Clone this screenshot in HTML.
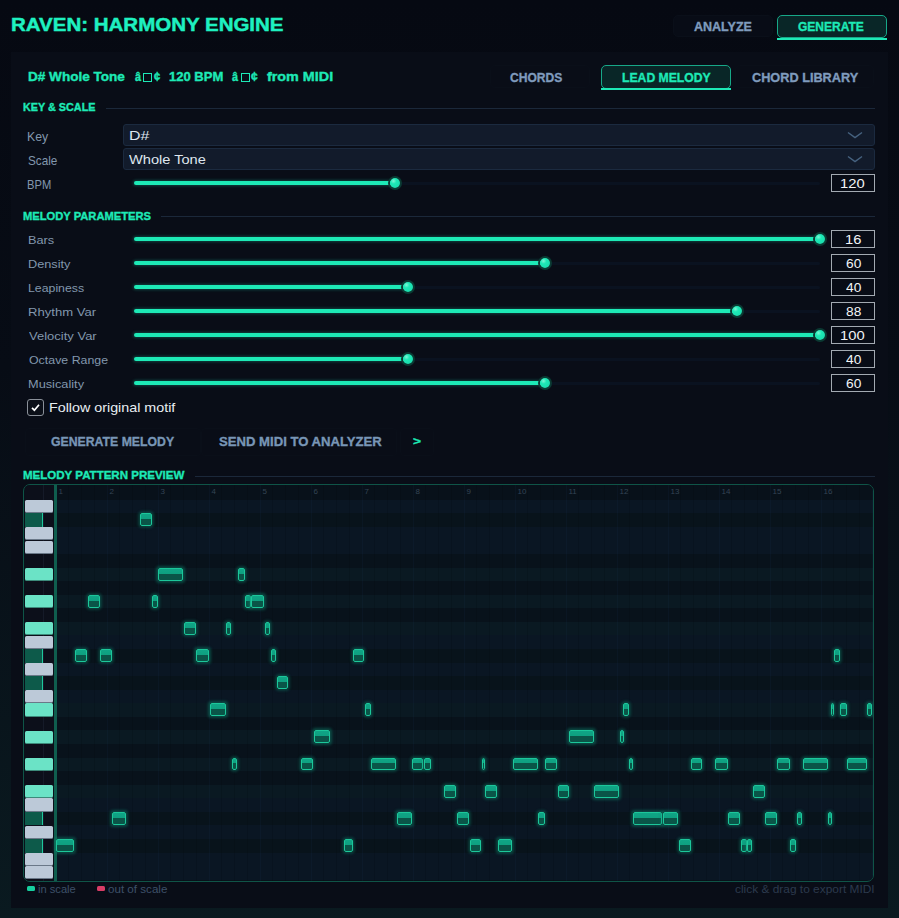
<!DOCTYPE html><html><head><meta charset="utf-8"><style>
*{box-sizing:border-box;margin:0;padding:0}
html,body{width:899px;height:918px;overflow:hidden}
body{position:relative;font-family:"Liberation Sans",sans-serif;background:linear-gradient(180deg,#060912 0%,#070c15 40%,#0a1a20 100%)}
.t{position:absolute;white-space:pre;line-height:1;transform-origin:0 0}
.b{position:absolute}
.n{position:absolute;border:1px solid #1cc79a;border-radius:2px;background:linear-gradient(180deg,#10a586 0,#0ea080 44%,#0a5548 44%,#0a5548 100%);box-shadow:0 0 3px 1.5px rgba(14,140,112,0.45)}
</style></head><body>
<div class="b" style="left:11px;top:52px;width:877px;height:856px;background:#090d17"></div>
<div class="t" id="t0" style="left:11.398px;top:14.76px;font-size:18.99px;transform:scaleX(1.07961);font-weight:bold;color:#1ef0c0;-webkit-text-stroke:0.45px #1ef0c0;">RAVEN: HARMONY ENGINE</div>
<div class="b" style="left:673px;top:15px;width:100px;height:22px;border:1px solid #0a0f19;border-radius:5px;background:#080c16"></div>
<div class="b" style="left:777px;top:15px;width:110px;height:23px;border:1px solid #17a888;border-radius:5px;background:#092627"></div>
<div class="b" style="left:777px;top:38px;width:110px;height:2px;background:#1de9b6"></div>
<div class="t" id="t1" style="left:693.800px;top:19.79px;font-size:13.19px;transform:scaleX(0.94888);font-weight:bold;color:#7f9bbd;-webkit-text-stroke:0.35px #7f9bbd;">ANALYZE</div>
<div class="t" id="t2" style="left:798.204px;top:19.79px;font-size:13.19px;transform:scaleX(0.91080);font-weight:bold;color:#1de9b6;-webkit-text-stroke:0.35px #1de9b6;">GENERATE</div>
<div class="t" id="t3" style="left:28.003px;top:71.35px;font-size:12.17px;transform:scaleX(1.11497);font-weight:bold;color:#1de9b6;-webkit-text-stroke:0.35px #1de9b6;">D# Whole Tone</div>
<div class="t" id="t4" style="left:134.750px;top:71.35px;font-size:12.17px;transform:scaleX(0.89091);font-weight:bold;color:#1de9b6;-webkit-text-stroke:0.35px #1de9b6;">â</div>
<div class="b" style="left:142.7px;top:73.3px;width:9.300000000000011px;height:8.5px;border:1.3px solid #1de9b6"></div>
<div class="t" id="t5" style="left:153.777px;top:71.35px;font-size:12.17px;transform:scaleX(0.92190);font-weight:bold;color:#1de9b6;-webkit-text-stroke:0.35px #1de9b6;">¢</div>
<div class="t" id="t6" style="left:232.437px;top:71.35px;font-size:12.17px;transform:scaleX(0.89091);font-weight:bold;color:#1de9b6;-webkit-text-stroke:0.35px #1de9b6;">â</div>
<div class="b" style="left:241px;top:73.3px;width:9.400000000000006px;height:8.5px;border:1.3px solid #1de9b6"></div>
<div class="t" id="t7" style="left:251.426px;top:71.35px;font-size:12.17px;transform:scaleX(0.98685);font-weight:bold;color:#1de9b6;-webkit-text-stroke:0.35px #1de9b6;">¢</div>
<div class="t" id="t8" style="left:169.399px;top:71.35px;font-size:12.17px;transform:scaleX(1.07194);font-weight:bold;color:#1de9b6;-webkit-text-stroke:0.35px #1de9b6;">120 BPM</div>
<div class="t" id="t9" style="left:266.995px;top:71.35px;font-size:12.17px;transform:scaleX(1.17961);font-weight:bold;color:#1de9b6;-webkit-text-stroke:0.35px #1de9b6;">from MIDI</div>
<div class="b" style="left:490px;top:65px;width:100px;height:23px;border:1px solid #0a0f19;border-radius:5px"></div>
<div class="b" style="left:735px;top:65px;width:139px;height:23px;border:1px solid #0a0f19;border-radius:5px"></div>
<div class="b" style="left:601px;top:65px;width:130px;height:24px;border:1px solid #17a888;border-radius:5px;background:#092627"></div>
<div class="b" style="left:601px;top:88px;width:130px;height:2px;background:#1de9b6"></div>
<div class="t" id="t10" style="left:510.010px;top:70.67px;font-size:13.33px;transform:scaleX(0.90718);font-weight:bold;color:#7f9bbd;-webkit-text-stroke:0.35px #7f9bbd;">CHORDS</div>
<div class="t" id="t11" style="left:621.793px;top:70.67px;font-size:13.33px;transform:scaleX(0.91488);font-weight:bold;color:#1de9b6;-webkit-text-stroke:0.35px #1de9b6;">LEAD MELODY</div>
<div class="t" id="t12" style="left:752.007px;top:70.67px;font-size:13.33px;transform:scaleX(0.95365);font-weight:bold;color:#7f9bbd;-webkit-text-stroke:0.35px #7f9bbd;">CHORD LIBRARY</div>
<div class="t" id="t13" style="left:23.204px;top:102.24px;font-size:11.01px;transform:scaleX(0.98283);font-weight:bold;color:#1de9b6;-webkit-text-stroke:0.35px #1de9b6;">KEY &amp; SCALE</div>
<div class="b" style="left:106px;top:108px;width:769px;height:1px;background:#1b283a"></div>
<div class="t" id="t14" style="left:23.201px;top:210.64px;font-size:11.01px;transform:scaleX(1.01546);font-weight:bold;color:#1de9b6;-webkit-text-stroke:0.35px #1de9b6;">MELODY PARAMETERS</div>
<div class="b" style="left:161px;top:216px;width:714px;height:1px;background:#1b283a"></div>
<div class="t" id="t15" style="left:23.401px;top:470.07px;font-size:11.45px;transform:scaleX(1.00766);font-weight:bold;color:#1de9b6;-webkit-text-stroke:0.35px #1de9b6;">MELODY PATTERN PREVIEW</div>
<div class="b" style="left:195px;top:476px;width:680px;height:1px;background:#1b283a"></div>
<div class="t" id="t16" style="left:27.158px;top:130.58px;font-size:12.03px;transform:scaleX(1.02255);font-weight:normal;color:#8297ad;-webkit-text-stroke:0px #8297ad;">Key</div>
<div class="t" id="t17" style="left:28.005px;top:154.58px;font-size:12.03px;transform:scaleX(0.97603);font-weight:normal;color:#8297ad;-webkit-text-stroke:0px #8297ad;">Scale</div>
<div class="t" id="t18" style="left:26.925px;top:178.58px;font-size:12.03px;transform:scaleX(0.92842);font-weight:normal;color:#8297ad;-webkit-text-stroke:0px #8297ad;">BPM</div>
<div class="b" style="left:123px;top:124px;width:752px;height:22px;border:1px solid #1b2a3f;border-radius:3px;background:#121b2b"></div>
<svg class="b" style="left:846px;top:131px" width="18" height="9" viewBox="0 0 18 9"><path d="M2 1.5 L9 6.5 L16 1.5" fill="none" stroke="#46627f" stroke-width="1.5"/></svg>
<div class="b" style="left:123px;top:148px;width:752px;height:22px;border:1px solid #1b2a3f;border-radius:3px;background:#121b2b"></div>
<svg class="b" style="left:846px;top:155px" width="18" height="9" viewBox="0 0 18 9"><path d="M2 1.5 L9 6.5 L16 1.5" fill="none" stroke="#46627f" stroke-width="1.5"/></svg>
<div class="t" id="t19" style="left:128.763px;top:128.57px;font-size:13.33px;transform:scaleX(1.19219);font-weight:normal;color:#dfe6ee;-webkit-text-stroke:0px #dfe6ee;">D#</div>
<div class="t" id="t20" style="left:128.997px;top:152.57px;font-size:13.33px;transform:scaleX(1.09522);font-weight:normal;color:#dfe6ee;-webkit-text-stroke:0px #dfe6ee;">Whole Tone</div>
<div class="b" style="left:134px;top:181.5px;width:686px;height:3px;border-radius:1.5px;background:#0a1220"></div>
<div class="b" style="left:134px;top:181px;width:261.3px;height:4px;border-radius:2px;background:#1de9b6;box-shadow:0 0 3px 1px rgba(29,233,182,0.25)"></div>
<div class="b" style="left:390.3px;top:178px;width:10px;height:10px;border-radius:50%;background:radial-gradient(circle at 35% 30%,#7ff5d5 0,#1de9b6 30%,#19d6a8 100%);box-shadow:0 0 0 2px #0b3a33"></div>
<div class="b" style="left:831px;top:174px;width:44px;height:18px;border:1.3px solid #a3aab2;background:#080c16"></div>
<div class="t" id="t21" style="left:839.997px;top:176.79px;font-size:13.19px;transform:scaleX(1.11988);font-weight:normal;color:#f2f4f6;-webkit-text-stroke:0px #f2f4f6;">120</div>
<div class="t" id="t22" style="left:27.758px;top:235.14px;font-size:11.59px;transform:scaleX(1.10204);font-weight:normal;color:#8297ad;-webkit-text-stroke:0px #8297ad;">Bars</div>
<div class="b" style="left:134px;top:237.5px;width:686px;height:3px;border-radius:1.5px;background:#0a1220"></div>
<div class="b" style="left:134px;top:237px;width:685.7px;height:4px;border-radius:2px;background:#1de9b6;box-shadow:0 0 3px 1px rgba(29,233,182,0.25)"></div>
<div class="b" style="left:814.7px;top:234px;width:10px;height:10px;border-radius:50%;background:radial-gradient(circle at 35% 30%,#7ff5d5 0,#1de9b6 30%,#19d6a8 100%);box-shadow:0 0 0 2px #0b3a33"></div>
<div class="b" style="left:831px;top:230px;width:44px;height:18px;border:1.3px solid #a3aab2;background:#080c16"></div>
<div class="t" id="t23" style="left:844.694px;top:232.79px;font-size:13.19px;transform:scaleX(1.11675);font-weight:normal;color:#f2f4f6;-webkit-text-stroke:0px #f2f4f6;">16</div>
<div class="t" id="t24" style="left:27.788px;top:259.14px;font-size:11.59px;transform:scaleX(1.09976);font-weight:normal;color:#8297ad;-webkit-text-stroke:0px #8297ad;">Density</div>
<div class="b" style="left:134px;top:261.5px;width:686px;height:3px;border-radius:1.5px;background:#0a1220"></div>
<div class="b" style="left:134px;top:261px;width:411px;height:4px;border-radius:2px;background:#1de9b6;box-shadow:0 0 3px 1px rgba(29,233,182,0.25)"></div>
<div class="b" style="left:540px;top:258px;width:10px;height:10px;border-radius:50%;background:radial-gradient(circle at 35% 30%,#7ff5d5 0,#1de9b6 30%,#19d6a8 100%);box-shadow:0 0 0 2px #0b3a33"></div>
<div class="b" style="left:831px;top:254px;width:44px;height:18px;border:1.3px solid #a3aab2;background:#080c16"></div>
<div class="t" id="t25" style="left:845.756px;top:256.79px;font-size:13.19px;transform:scaleX(1.04230);font-weight:normal;color:#f2f4f6;-webkit-text-stroke:0px #f2f4f6;">60</div>
<div class="t" id="t26" style="left:27.788px;top:283.14px;font-size:11.59px;transform:scaleX(1.06331);font-weight:normal;color:#8297ad;-webkit-text-stroke:0px #8297ad;">Leapiness</div>
<div class="b" style="left:134px;top:285.5px;width:686px;height:3px;border-radius:1.5px;background:#0a1220"></div>
<div class="b" style="left:134px;top:285px;width:274px;height:4px;border-radius:2px;background:#1de9b6;box-shadow:0 0 3px 1px rgba(29,233,182,0.25)"></div>
<div class="b" style="left:403px;top:282px;width:10px;height:10px;border-radius:50%;background:radial-gradient(circle at 35% 30%,#7ff5d5 0,#1de9b6 30%,#19d6a8 100%);box-shadow:0 0 0 2px #0b3a33"></div>
<div class="b" style="left:831px;top:278px;width:44px;height:18px;border:1.3px solid #a3aab2;background:#080c16"></div>
<div class="t" id="t27" style="left:845.756px;top:280.79px;font-size:13.19px;transform:scaleX(1.04230);font-weight:normal;color:#f2f4f6;-webkit-text-stroke:0px #f2f4f6;">40</div>
<div class="t" id="t28" style="left:27.795px;top:307.14px;font-size:11.59px;transform:scaleX(1.12970);font-weight:normal;color:#8297ad;-webkit-text-stroke:0px #8297ad;">Rhythm Var</div>
<div class="b" style="left:134px;top:309.5px;width:686px;height:3px;border-radius:1.5px;background:#0a1220"></div>
<div class="b" style="left:134px;top:309px;width:603px;height:4px;border-radius:2px;background:#1de9b6;box-shadow:0 0 3px 1px rgba(29,233,182,0.25)"></div>
<div class="b" style="left:732px;top:306px;width:10px;height:10px;border-radius:50%;background:radial-gradient(circle at 35% 30%,#7ff5d5 0,#1de9b6 30%,#19d6a8 100%);box-shadow:0 0 0 2px #0b3a33"></div>
<div class="b" style="left:831px;top:302px;width:44px;height:18px;border:1.3px solid #a3aab2;background:#080c16"></div>
<div class="t" id="t29" style="left:845.756px;top:304.79px;font-size:13.19px;transform:scaleX(1.04230);font-weight:normal;color:#f2f4f6;-webkit-text-stroke:0px #f2f4f6;">88</div>
<div class="t" id="t30" style="left:28.802px;top:331.14px;font-size:11.59px;transform:scaleX(1.12302);font-weight:normal;color:#8297ad;-webkit-text-stroke:0px #8297ad;">Velocity Var</div>
<div class="b" style="left:134px;top:333.5px;width:686px;height:3px;border-radius:1.5px;background:#0a1220"></div>
<div class="b" style="left:134px;top:333px;width:685.7px;height:4px;border-radius:2px;background:#1de9b6;box-shadow:0 0 3px 1px rgba(29,233,182,0.25)"></div>
<div class="b" style="left:814.7px;top:330px;width:10px;height:10px;border-radius:50%;background:radial-gradient(circle at 35% 30%,#7ff5d5 0,#1de9b6 30%,#19d6a8 100%);box-shadow:0 0 0 2px #0b3a33"></div>
<div class="b" style="left:831px;top:326px;width:44px;height:18px;border:1.3px solid #a3aab2;background:#080c16"></div>
<div class="t" id="t31" style="left:839.997px;top:328.79px;font-size:13.19px;transform:scaleX(1.11988);font-weight:normal;color:#f2f4f6;-webkit-text-stroke:0px #f2f4f6;">100</div>
<div class="t" id="t32" style="left:28.803px;top:355.14px;font-size:11.59px;transform:scaleX(1.06853);font-weight:normal;color:#8297ad;-webkit-text-stroke:0px #8297ad;">Octave Range</div>
<div class="b" style="left:134px;top:357.5px;width:686px;height:3px;border-radius:1.5px;background:#0a1220"></div>
<div class="b" style="left:134px;top:357px;width:274px;height:4px;border-radius:2px;background:#1de9b6;box-shadow:0 0 3px 1px rgba(29,233,182,0.25)"></div>
<div class="b" style="left:403px;top:354px;width:10px;height:10px;border-radius:50%;background:radial-gradient(circle at 35% 30%,#7ff5d5 0,#1de9b6 30%,#19d6a8 100%);box-shadow:0 0 0 2px #0b3a33"></div>
<div class="b" style="left:831px;top:350px;width:44px;height:18px;border:1.3px solid #a3aab2;background:#080c16"></div>
<div class="t" id="t33" style="left:845.756px;top:352.79px;font-size:13.19px;transform:scaleX(1.04230);font-weight:normal;color:#f2f4f6;-webkit-text-stroke:0px #f2f4f6;">40</div>
<div class="t" id="t34" style="left:27.788px;top:379.14px;font-size:11.59px;transform:scaleX(1.10240);font-weight:normal;color:#8297ad;-webkit-text-stroke:0px #8297ad;">Musicality</div>
<div class="b" style="left:134px;top:381.5px;width:686px;height:3px;border-radius:1.5px;background:#0a1220"></div>
<div class="b" style="left:134px;top:381px;width:411px;height:4px;border-radius:2px;background:#1de9b6;box-shadow:0 0 3px 1px rgba(29,233,182,0.25)"></div>
<div class="b" style="left:540px;top:378px;width:10px;height:10px;border-radius:50%;background:radial-gradient(circle at 35% 30%,#7ff5d5 0,#1de9b6 30%,#19d6a8 100%);box-shadow:0 0 0 2px #0b3a33"></div>
<div class="b" style="left:831px;top:374px;width:44px;height:18px;border:1.3px solid #a3aab2;background:#080c16"></div>
<div class="t" id="t35" style="left:845.756px;top:376.79px;font-size:13.19px;transform:scaleX(1.04230);font-weight:normal;color:#f2f4f6;-webkit-text-stroke:0px #f2f4f6;">60</div>
<div class="b" style="left:26.5px;top:398.5px;width:17px;height:17px;border:1.5px solid #8a9099;border-radius:3px;background:#0b0f18"></div>
<svg class="b" style="left:26.5px;top:398.5px" width="17" height="17" viewBox="0 0 17 17"><path d="M5 8.8 L7.4 11.2 L12 5.8" fill="none" stroke="#ffffff" stroke-width="1.7"/></svg>
<div class="t" id="t36" style="left:48.596px;top:400.77px;font-size:13.33px;transform:scaleX(1.07236);font-weight:normal;color:#e8edf2;-webkit-text-stroke:0px #e8edf2;">Follow original motif</div>
<div class="b" style="left:25px;top:428px;width:176px;height:28px;border:1px solid #0a0f19;border-radius:4px"></div>
<div class="b" style="left:201px;top:428px;width:196px;height:28px;border:1px solid #0a0f19;border-radius:4px"></div>
<div class="b" style="left:400px;top:428px;width:34px;height:28px;border:1px solid #0a0f19;border-radius:4px"></div>
<div class="t" id="t37" style="left:51.397px;top:434.77px;font-size:13.33px;transform:scaleX(0.92027);font-weight:bold;color:#7896b6;-webkit-text-stroke:0.35px #7896b6;">GENERATE MELODY</div>
<div class="t" id="t38" style="left:219.000px;top:434.77px;font-size:13.33px;transform:scaleX(0.98419);font-weight:bold;color:#7896b6;-webkit-text-stroke:0.35px #7896b6;">SEND MIDI TO ANALYZER</div>
<div class="t" id="t39" style="left:413.000px;top:435.64px;font-size:11.59px;transform:scaleX(1.18340);font-weight:bold;color:#1de9b6;-webkit-text-stroke:0.35px #1de9b6;">&gt;</div>
<div class="b" style="left:23px;top:484px;width:851px;height:398px;border:1px solid #0f5447;border-radius:7px;background:#08111a;overflow:hidden">
<div class="b" style="left:33px;top:14.70px;width:816px;height:13.62px;background:#0a1623"></div>
<div class="b" style="left:33px;top:28.27px;width:816px;height:13.62px;background:#08131b"></div>
<div class="b" style="left:33px;top:41.84px;width:816px;height:13.62px;background:#0a1623"></div>
<div class="b" style="left:33px;top:55.41px;width:816px;height:13.62px;background:#0a1623"></div>
<div class="b" style="left:33px;top:68.98px;width:816px;height:13.62px;background:#08121b"></div>
<div class="b" style="left:33px;top:82.55px;width:816px;height:13.62px;background:#0a1922"></div>
<div class="b" style="left:33px;top:96.12px;width:816px;height:13.62px;background:#08121b"></div>
<div class="b" style="left:33px;top:109.69px;width:816px;height:13.62px;background:#0a1922"></div>
<div class="b" style="left:33px;top:123.26px;width:816px;height:13.62px;background:#08121b"></div>
<div class="b" style="left:33px;top:136.83px;width:816px;height:13.62px;background:#0a1922"></div>
<div class="b" style="left:33px;top:150.40px;width:816px;height:13.62px;background:#0a1623"></div>
<div class="b" style="left:33px;top:163.97px;width:816px;height:13.62px;background:#08131b"></div>
<div class="b" style="left:33px;top:177.54px;width:816px;height:13.62px;background:#0a1623"></div>
<div class="b" style="left:33px;top:191.11px;width:816px;height:13.62px;background:#08131b"></div>
<div class="b" style="left:33px;top:204.68px;width:816px;height:13.62px;background:#0a1623"></div>
<div class="b" style="left:33px;top:218.25px;width:816px;height:13.62px;background:#0a1922"></div>
<div class="b" style="left:33px;top:231.82px;width:816px;height:13.62px;background:#08121b"></div>
<div class="b" style="left:33px;top:245.39px;width:816px;height:13.62px;background:#0a1922"></div>
<div class="b" style="left:33px;top:258.96px;width:816px;height:13.62px;background:#08121b"></div>
<div class="b" style="left:33px;top:272.53px;width:816px;height:13.62px;background:#0a1922"></div>
<div class="b" style="left:33px;top:286.10px;width:816px;height:13.62px;background:#08121b"></div>
<div class="b" style="left:33px;top:299.67px;width:816px;height:13.62px;background:#0a1922"></div>
<div class="b" style="left:33px;top:313.24px;width:816px;height:13.62px;background:#0a1623"></div>
<div class="b" style="left:33px;top:326.81px;width:816px;height:13.62px;background:#08131b"></div>
<div class="b" style="left:33px;top:340.38px;width:816px;height:13.62px;background:#0a1623"></div>
<div class="b" style="left:33px;top:353.95px;width:816px;height:13.62px;background:#08131b"></div>
<div class="b" style="left:33px;top:367.52px;width:816px;height:13.62px;background:#0a1623"></div>
<div class="b" style="left:33px;top:381.09px;width:816px;height:13.62px;background:#0a1623"></div>
<div class="b" style="left:33px;top:0;width:816px;height:14.699999999999989px;background:#08111a"></div>
<div class="b" style="left:44.25px;top:0;width:1px;height:398px;background:rgba(0,0,0,0.10)"></div>
<div class="b" style="left:57.00px;top:0;width:1px;height:398px;background:rgba(0,0,0,0.10)"></div>
<div class="b" style="left:69.75px;top:0;width:1px;height:398px;background:rgba(0,0,0,0.10)"></div>
<div class="b" style="left:82.50px;top:0;width:1px;height:398px;background:rgba(40,80,140,0.07)"></div>
<div class="b" style="left:95.25px;top:0;width:1px;height:398px;background:rgba(0,0,0,0.10)"></div>
<div class="b" style="left:108.00px;top:0;width:1px;height:398px;background:rgba(0,0,0,0.10)"></div>
<div class="b" style="left:120.75px;top:0;width:1px;height:398px;background:rgba(0,0,0,0.10)"></div>
<div class="b" style="left:133.50px;top:0;width:1px;height:398px;background:rgba(40,80,140,0.07)"></div>
<div class="b" style="left:146.25px;top:0;width:1px;height:398px;background:rgba(0,0,0,0.10)"></div>
<div class="b" style="left:159.00px;top:0;width:1px;height:398px;background:rgba(0,0,0,0.10)"></div>
<div class="b" style="left:171.75px;top:0;width:1px;height:398px;background:rgba(0,0,0,0.10)"></div>
<div class="b" style="left:184.50px;top:0;width:1px;height:398px;background:rgba(40,80,140,0.07)"></div>
<div class="b" style="left:197.25px;top:0;width:1px;height:398px;background:rgba(0,0,0,0.10)"></div>
<div class="b" style="left:210.00px;top:0;width:1px;height:398px;background:rgba(0,0,0,0.10)"></div>
<div class="b" style="left:222.75px;top:0;width:1px;height:398px;background:rgba(0,0,0,0.10)"></div>
<div class="b" style="left:235.50px;top:0;width:1px;height:398px;background:rgba(40,80,140,0.07)"></div>
<div class="b" style="left:248.25px;top:0;width:1px;height:398px;background:rgba(0,0,0,0.10)"></div>
<div class="b" style="left:261.00px;top:0;width:1px;height:398px;background:rgba(0,0,0,0.10)"></div>
<div class="b" style="left:273.75px;top:0;width:1px;height:398px;background:rgba(0,0,0,0.10)"></div>
<div class="b" style="left:286.50px;top:0;width:1px;height:398px;background:rgba(40,80,140,0.07)"></div>
<div class="b" style="left:299.25px;top:0;width:1px;height:398px;background:rgba(0,0,0,0.10)"></div>
<div class="b" style="left:312.00px;top:0;width:1px;height:398px;background:rgba(0,0,0,0.10)"></div>
<div class="b" style="left:324.75px;top:0;width:1px;height:398px;background:rgba(0,0,0,0.10)"></div>
<div class="b" style="left:337.50px;top:0;width:1px;height:398px;background:rgba(40,80,140,0.07)"></div>
<div class="b" style="left:350.25px;top:0;width:1px;height:398px;background:rgba(0,0,0,0.10)"></div>
<div class="b" style="left:363.00px;top:0;width:1px;height:398px;background:rgba(0,0,0,0.10)"></div>
<div class="b" style="left:375.75px;top:0;width:1px;height:398px;background:rgba(0,0,0,0.10)"></div>
<div class="b" style="left:388.50px;top:0;width:1px;height:398px;background:rgba(40,80,140,0.07)"></div>
<div class="b" style="left:401.25px;top:0;width:1px;height:398px;background:rgba(0,0,0,0.10)"></div>
<div class="b" style="left:414.00px;top:0;width:1px;height:398px;background:rgba(0,0,0,0.10)"></div>
<div class="b" style="left:426.75px;top:0;width:1px;height:398px;background:rgba(0,0,0,0.10)"></div>
<div class="b" style="left:439.50px;top:0;width:1px;height:398px;background:rgba(40,80,140,0.07)"></div>
<div class="b" style="left:452.25px;top:0;width:1px;height:398px;background:rgba(0,0,0,0.10)"></div>
<div class="b" style="left:465.00px;top:0;width:1px;height:398px;background:rgba(0,0,0,0.10)"></div>
<div class="b" style="left:477.75px;top:0;width:1px;height:398px;background:rgba(0,0,0,0.10)"></div>
<div class="b" style="left:490.50px;top:0;width:1px;height:398px;background:rgba(40,80,140,0.07)"></div>
<div class="b" style="left:503.25px;top:0;width:1px;height:398px;background:rgba(0,0,0,0.10)"></div>
<div class="b" style="left:516.00px;top:0;width:1px;height:398px;background:rgba(0,0,0,0.10)"></div>
<div class="b" style="left:528.75px;top:0;width:1px;height:398px;background:rgba(0,0,0,0.10)"></div>
<div class="b" style="left:541.50px;top:0;width:1px;height:398px;background:rgba(40,80,140,0.07)"></div>
<div class="b" style="left:554.25px;top:0;width:1px;height:398px;background:rgba(0,0,0,0.10)"></div>
<div class="b" style="left:567.00px;top:0;width:1px;height:398px;background:rgba(0,0,0,0.10)"></div>
<div class="b" style="left:579.75px;top:0;width:1px;height:398px;background:rgba(0,0,0,0.10)"></div>
<div class="b" style="left:592.50px;top:0;width:1px;height:398px;background:rgba(40,80,140,0.07)"></div>
<div class="b" style="left:605.25px;top:0;width:1px;height:398px;background:rgba(0,0,0,0.10)"></div>
<div class="b" style="left:618.00px;top:0;width:1px;height:398px;background:rgba(0,0,0,0.10)"></div>
<div class="b" style="left:630.75px;top:0;width:1px;height:398px;background:rgba(0,0,0,0.10)"></div>
<div class="b" style="left:643.50px;top:0;width:1px;height:398px;background:rgba(40,80,140,0.07)"></div>
<div class="b" style="left:656.25px;top:0;width:1px;height:398px;background:rgba(0,0,0,0.10)"></div>
<div class="b" style="left:669.00px;top:0;width:1px;height:398px;background:rgba(0,0,0,0.10)"></div>
<div class="b" style="left:681.75px;top:0;width:1px;height:398px;background:rgba(0,0,0,0.10)"></div>
<div class="b" style="left:694.50px;top:0;width:1px;height:398px;background:rgba(40,80,140,0.07)"></div>
<div class="b" style="left:707.25px;top:0;width:1px;height:398px;background:rgba(0,0,0,0.10)"></div>
<div class="b" style="left:720.00px;top:0;width:1px;height:398px;background:rgba(0,0,0,0.10)"></div>
<div class="b" style="left:732.75px;top:0;width:1px;height:398px;background:rgba(0,0,0,0.10)"></div>
<div class="b" style="left:745.50px;top:0;width:1px;height:398px;background:rgba(40,80,140,0.07)"></div>
<div class="b" style="left:758.25px;top:0;width:1px;height:398px;background:rgba(0,0,0,0.10)"></div>
<div class="b" style="left:771.00px;top:0;width:1px;height:398px;background:rgba(0,0,0,0.10)"></div>
<div class="b" style="left:783.75px;top:0;width:1px;height:398px;background:rgba(0,0,0,0.10)"></div>
<div class="b" style="left:796.50px;top:0;width:1px;height:398px;background:rgba(40,80,140,0.07)"></div>
<div class="b" style="left:809.25px;top:0;width:1px;height:398px;background:rgba(0,0,0,0.10)"></div>
<div class="b" style="left:822.00px;top:0;width:1px;height:398px;background:rgba(0,0,0,0.10)"></div>
<div class="b" style="left:834.75px;top:0;width:1px;height:398px;background:rgba(0,0,0,0.10)"></div>
<div class="b" style="left:847.50px;top:0;width:1px;height:398px;background:rgba(40,80,140,0.07)"></div>
<div class="b" style="left:1px;top:0;width:29px;height:398px;background:#0c0f1a"></div>
<div class="b" style="left:19px;top:0;width:1px;height:398px;background:#151a28"></div>
<div class="b" style="left:1px;top:14.90px;width:28px;height:12.07px;background:#bcc9d8;border-radius:1.5px;box-shadow:0 1px 0.5px #6a7888"></div>
<div class="b" style="left:1px;top:28.27px;width:18px;height:13.57px;background:#0d5a4a;border-right:1.5px solid #1fc79c"></div>
<div class="b" style="left:1px;top:42.04px;width:28px;height:12.07px;background:#bcc9d8;border-radius:1.5px;box-shadow:0 1px 0.5px #6a7888"></div>
<div class="b" style="left:1px;top:55.61px;width:28px;height:12.07px;background:#bcc9d8;border-radius:1.5px;box-shadow:0 1px 0.5px #6a7888"></div>
<div class="b" style="left:1px;top:82.75px;width:28px;height:12.07px;background:#6be3c6;border-radius:1.5px;box-shadow:0 1px 0.5px #3c8a7a"></div>
<div class="b" style="left:1px;top:109.89px;width:28px;height:12.07px;background:#6be3c6;border-radius:1.5px;box-shadow:0 1px 0.5px #3c8a7a"></div>
<div class="b" style="left:1px;top:137.03px;width:28px;height:12.07px;background:#6be3c6;border-radius:1.5px;box-shadow:0 1px 0.5px #3c8a7a"></div>
<div class="b" style="left:1px;top:150.60px;width:28px;height:12.07px;background:#bcc9d8;border-radius:1.5px;box-shadow:0 1px 0.5px #6a7888"></div>
<div class="b" style="left:1px;top:163.97px;width:18px;height:13.57px;background:#0d5a4a;border-right:1.5px solid #1fc79c"></div>
<div class="b" style="left:1px;top:177.74px;width:28px;height:12.07px;background:#bcc9d8;border-radius:1.5px;box-shadow:0 1px 0.5px #6a7888"></div>
<div class="b" style="left:1px;top:191.11px;width:18px;height:13.57px;background:#0d5a4a;border-right:1.5px solid #1fc79c"></div>
<div class="b" style="left:1px;top:204.88px;width:28px;height:12.07px;background:#bcc9d8;border-radius:1.5px;box-shadow:0 1px 0.5px #6a7888"></div>
<div class="b" style="left:1px;top:218.45px;width:28px;height:12.07px;background:#6be3c6;border-radius:1.5px;box-shadow:0 1px 0.5px #3c8a7a"></div>
<div class="b" style="left:1px;top:245.59px;width:28px;height:12.07px;background:#6be3c6;border-radius:1.5px;box-shadow:0 1px 0.5px #3c8a7a"></div>
<div class="b" style="left:1px;top:272.73px;width:28px;height:12.07px;background:#6be3c6;border-radius:1.5px;box-shadow:0 1px 0.5px #3c8a7a"></div>
<div class="b" style="left:1px;top:299.87px;width:28px;height:12.07px;background:#6be3c6;border-radius:1.5px;box-shadow:0 1px 0.5px #3c8a7a"></div>
<div class="b" style="left:1px;top:313.44px;width:28px;height:12.07px;background:#bcc9d8;border-radius:1.5px;box-shadow:0 1px 0.5px #6a7888"></div>
<div class="b" style="left:1px;top:326.81px;width:18px;height:13.57px;background:#0d5a4a;border-right:1.5px solid #1fc79c"></div>
<div class="b" style="left:1px;top:340.58px;width:28px;height:12.07px;background:#bcc9d8;border-radius:1.5px;box-shadow:0 1px 0.5px #6a7888"></div>
<div class="b" style="left:1px;top:353.95px;width:18px;height:13.57px;background:#0d5a4a;border-right:1.5px solid #1fc79c"></div>
<div class="b" style="left:1px;top:367.72px;width:28px;height:12.07px;background:#bcc9d8;border-radius:1.5px;box-shadow:0 1px 0.5px #6a7888"></div>
<div class="b" style="left:1px;top:381.29px;width:28px;height:12.07px;background:#bcc9d8;border-radius:1.5px;box-shadow:0 1px 0.5px #6a7888"></div>
<div class="b" style="left:30px;top:0;width:3px;height:398px;background:#0f5e4e"></div>
<div class="t" style="left:34.50px;top:3px;font-size:8px;color:#344454">1</div>
<div class="t" style="left:85.50px;top:3px;font-size:8px;color:#344454">2</div>
<div class="t" style="left:136.50px;top:3px;font-size:8px;color:#344454">3</div>
<div class="t" style="left:187.50px;top:3px;font-size:8px;color:#344454">4</div>
<div class="t" style="left:238.50px;top:3px;font-size:8px;color:#344454">5</div>
<div class="t" style="left:289.50px;top:3px;font-size:8px;color:#344454">6</div>
<div class="t" style="left:340.50px;top:3px;font-size:8px;color:#344454">7</div>
<div class="t" style="left:391.50px;top:3px;font-size:8px;color:#344454">8</div>
<div class="t" style="left:442.50px;top:3px;font-size:8px;color:#344454">9</div>
<div class="t" style="left:493.50px;top:3px;font-size:8px;color:#344454">10</div>
<div class="t" style="left:544.50px;top:3px;font-size:8px;color:#344454">11</div>
<div class="t" style="left:595.50px;top:3px;font-size:8px;color:#344454">12</div>
<div class="t" style="left:646.50px;top:3px;font-size:8px;color:#344454">13</div>
<div class="t" style="left:697.50px;top:3px;font-size:8px;color:#344454">14</div>
<div class="t" style="left:748.50px;top:3px;font-size:8px;color:#344454">15</div>
<div class="t" style="left:799.50px;top:3px;font-size:8px;color:#344454">16</div>
<div class="n" style="left:116.00px;top:28.27px;width:12.30px;height:12.97px"></div>
<div class="n" style="left:134.40px;top:82.55px;width:25.10px;height:12.97px"></div>
<div class="n" style="left:213.60px;top:82.55px;width:7.10px;height:12.97px"></div>
<div class="n" style="left:64.00px;top:109.69px;width:11.70px;height:12.97px"></div>
<div class="n" style="left:128.30px;top:109.69px;width:5.80px;height:12.97px"></div>
<div class="n" style="left:221.30px;top:109.69px;width:5.50px;height:12.97px"></div>
<div class="n" style="left:227.40px;top:109.69px;width:12.50px;height:12.97px"></div>
<div class="n" style="left:160.10px;top:136.83px;width:11.60px;height:12.97px"></div>
<div class="n" style="left:201.70px;top:136.83px;width:5.50px;height:12.97px"></div>
<div class="n" style="left:240.50px;top:136.83px;width:5.50px;height:12.97px"></div>
<div class="n" style="left:50.90px;top:163.97px;width:12.20px;height:12.97px"></div>
<div class="n" style="left:76.00px;top:163.97px;width:11.90px;height:12.97px"></div>
<div class="n" style="left:172.30px;top:163.97px;width:12.60px;height:12.97px"></div>
<div class="n" style="left:246.70px;top:163.97px;width:5.80px;height:12.97px"></div>
<div class="n" style="left:329.40px;top:163.97px;width:10.80px;height:12.97px"></div>
<div class="n" style="left:810.20px;top:163.97px;width:5.90px;height:12.97px"></div>
<div class="n" style="left:253.40px;top:191.11px;width:10.40px;height:12.97px"></div>
<div class="n" style="left:186.10px;top:218.25px;width:15.60px;height:12.97px"></div>
<div class="n" style="left:340.80px;top:218.25px;width:6.10px;height:12.97px"></div>
<div class="n" style="left:599.00px;top:218.25px;width:6.30px;height:12.97px"></div>
<div class="n" style="left:806.70px;top:218.25px;width:3.50px;height:12.97px"></div>
<div class="n" style="left:816.10px;top:218.25px;width:6.50px;height:12.97px"></div>
<div class="n" style="left:842.90px;top:218.25px;width:5.30px;height:12.97px"></div>
<div class="n" style="left:290.10px;top:245.39px;width:16.10px;height:12.97px"></div>
<div class="n" style="left:545.10px;top:245.39px;width:25.10px;height:12.97px"></div>
<div class="n" style="left:595.90px;top:245.39px;width:3.80px;height:12.97px"></div>
<div class="n" style="left:207.80px;top:272.53px;width:5.20px;height:12.97px"></div>
<div class="n" style="left:277.30px;top:272.53px;width:11.60px;height:12.97px"></div>
<div class="n" style="left:346.90px;top:272.53px;width:25.40px;height:12.97px"></div>
<div class="n" style="left:388.20px;top:272.53px;width:11.30px;height:12.97px"></div>
<div class="n" style="left:399.80px;top:272.53px;width:7.30px;height:12.97px"></div>
<div class="n" style="left:457.60px;top:272.53px;width:3.40px;height:12.97px"></div>
<div class="n" style="left:488.50px;top:272.53px;width:25.40px;height:12.97px"></div>
<div class="n" style="left:520.60px;top:272.53px;width:12.30px;height:12.97px"></div>
<div class="n" style="left:605.30px;top:272.53px;width:3.70px;height:12.97px"></div>
<div class="n" style="left:666.90px;top:272.53px;width:11.50px;height:12.97px"></div>
<div class="n" style="left:691.20px;top:272.53px;width:13.10px;height:12.97px"></div>
<div class="n" style="left:753.20px;top:272.53px;width:13.10px;height:12.97px"></div>
<div class="n" style="left:779.00px;top:272.53px;width:25.00px;height:12.97px"></div>
<div class="n" style="left:822.60px;top:272.53px;width:20.00px;height:12.97px"></div>
<div class="n" style="left:420.30px;top:299.67px;width:12.20px;height:12.97px"></div>
<div class="n" style="left:461.00px;top:299.67px;width:12.20px;height:12.97px"></div>
<div class="n" style="left:534.10px;top:299.67px;width:10.70px;height:12.97px"></div>
<div class="n" style="left:570.20px;top:299.67px;width:25.10px;height:12.97px"></div>
<div class="n" style="left:728.90px;top:299.67px;width:11.80px;height:12.97px"></div>
<div class="n" style="left:88.20px;top:326.81px;width:14.10px;height:12.97px"></div>
<div class="n" style="left:372.90px;top:326.81px;width:15.30px;height:12.97px"></div>
<div class="n" style="left:433.20px;top:326.81px;width:11.90px;height:12.97px"></div>
<div class="n" style="left:514.20px;top:326.81px;width:6.40px;height:12.97px"></div>
<div class="n" style="left:609.00px;top:326.81px;width:29.30px;height:12.97px"></div>
<div class="n" style="left:638.90px;top:326.81px;width:14.90px;height:12.97px"></div>
<div class="n" style="left:704.30px;top:326.81px;width:12.10px;height:12.97px"></div>
<div class="n" style="left:741.40px;top:326.81px;width:11.50px;height:12.97px"></div>
<div class="n" style="left:772.50px;top:326.81px;width:5.90px;height:12.97px"></div>
<div class="n" style="left:804.30px;top:326.81px;width:3.40px;height:12.97px"></div>
<div class="n" style="left:31.90px;top:353.95px;width:18.10px;height:12.97px"></div>
<div class="n" style="left:320.00px;top:353.95px;width:9.10px;height:12.97px"></div>
<div class="n" style="left:445.70px;top:353.95px;width:11.30px;height:12.97px"></div>
<div class="n" style="left:473.80px;top:353.95px;width:14.40px;height:12.97px"></div>
<div class="n" style="left:655.10px;top:353.95px;width:11.80px;height:12.97px"></div>
<div class="n" style="left:717.40px;top:353.95px;width:5.60px;height:12.97px"></div>
<div class="n" style="left:723.30px;top:353.95px;width:5.00px;height:12.97px"></div>
<div class="n" style="left:766.30px;top:353.95px;width:5.60px;height:12.97px"></div>
</div>
<div class="b" style="left:26.8px;top:886px;width:8.3px;height:5px;border-radius:1.5px;background:#16cf9f"></div>
<div class="t" id="t40" style="left:38.401px;top:884.31px;font-size:10.58px;transform:scaleX(1.05367);font-weight:normal;color:#3d5068;-webkit-text-stroke:0px #3d5068;">in scale</div>
<div class="b" style="left:96.9px;top:886px;width:8.1px;height:5px;border-radius:1.5px;background:#d83d66"></div>
<div class="t" id="t41" style="left:108.200px;top:884.31px;font-size:10.58px;transform:scaleX(1.09747);font-weight:normal;color:#3d5068;-webkit-text-stroke:0px #3d5068;">out of scale</div>
<div class="t" id="t42" style="left:735.201px;top:884.31px;font-size:10.58px;transform:scaleX(1.12584);font-weight:normal;color:#2c3a4d;-webkit-text-stroke:0px #2c3a4d;">click &amp; drag to export MIDI</div>
</body></html>
